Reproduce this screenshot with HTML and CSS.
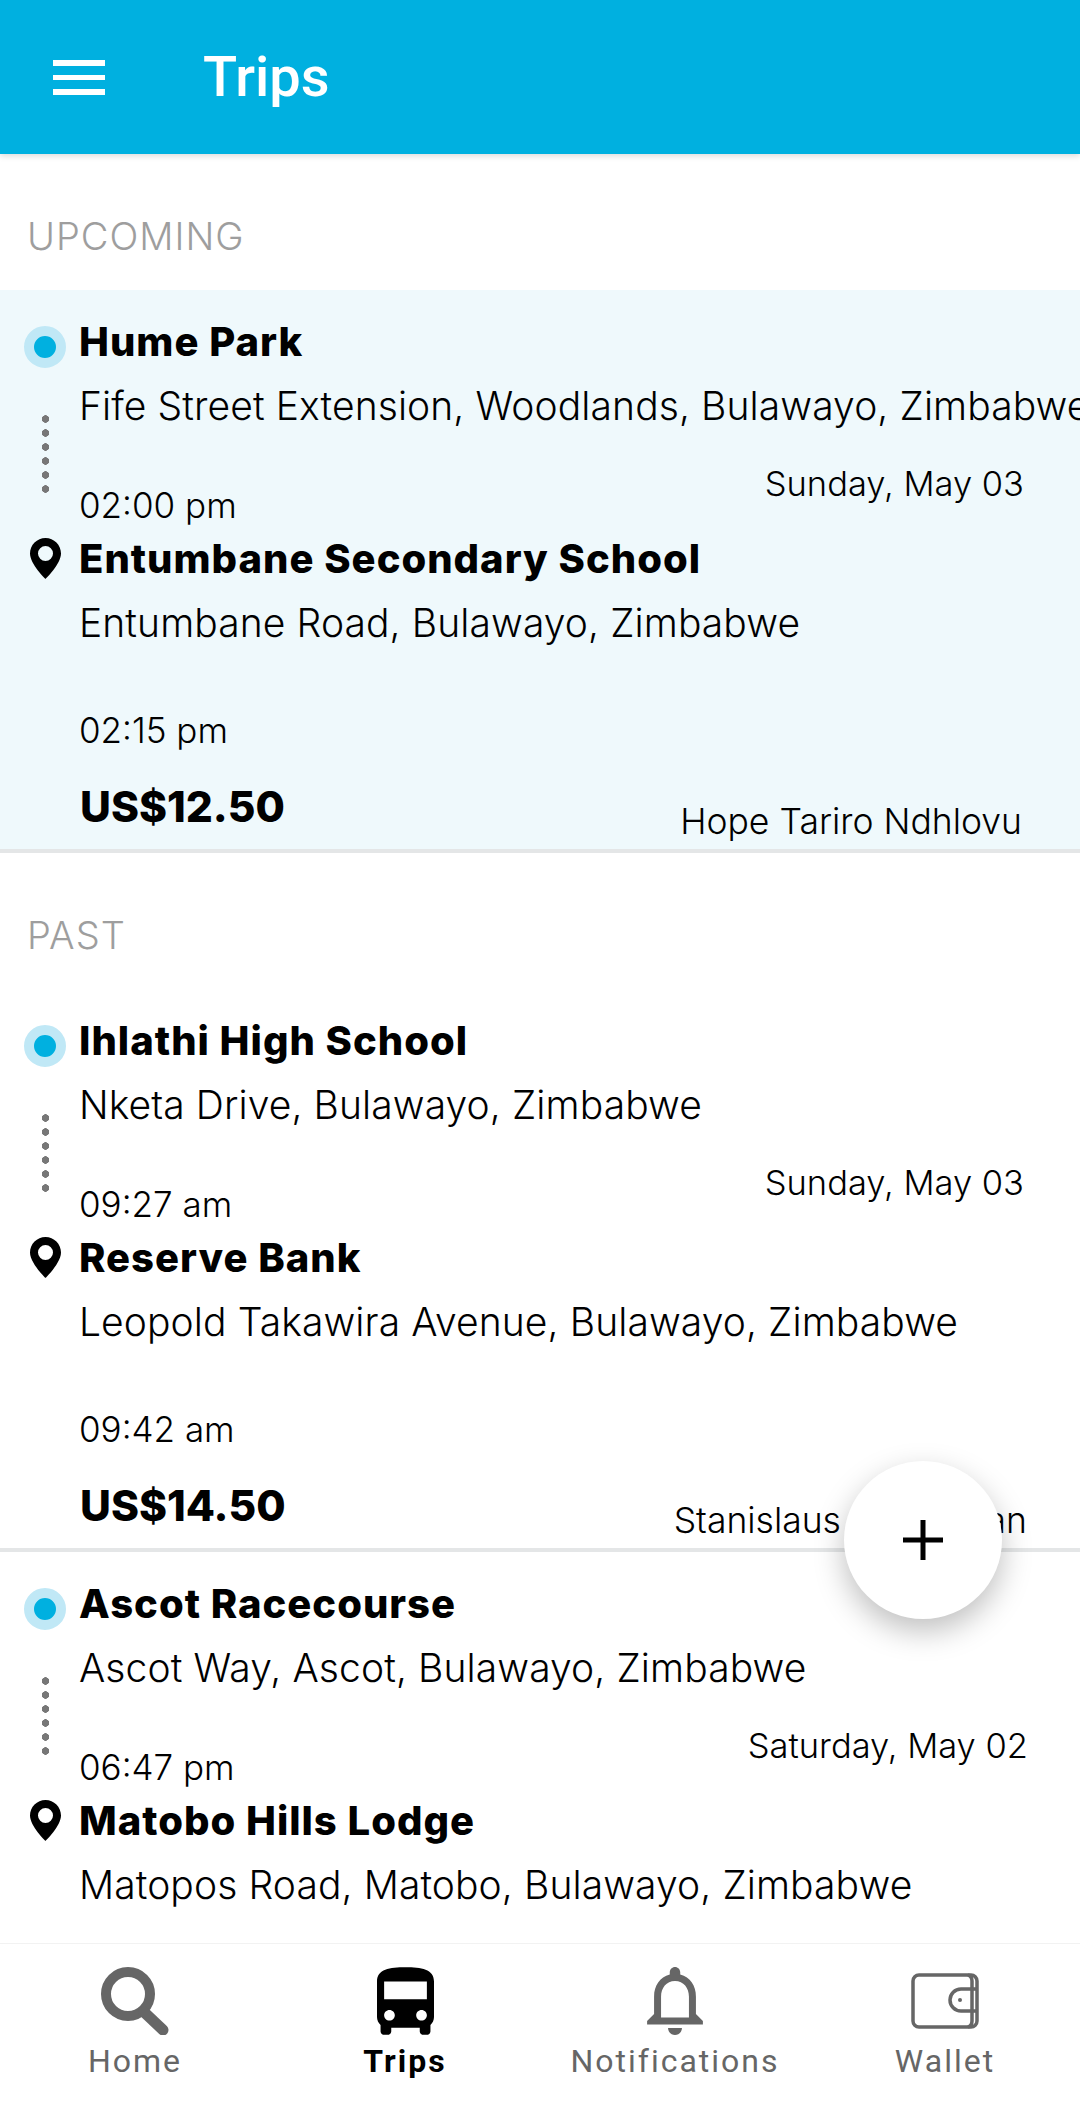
FILE: index.html
```html
<!DOCTYPE html>
<html lang="en">
<head>
<meta charset="UTF-8" />
<meta name="viewport" content="width=device-width, initial-scale=1.0"/>
<title>Trips</title>
<link rel="stylesheet" href="styles.css">
</head>
<body>
<div class="app">
  <header class="topbar">
    <svg class="menu-icon" width="52" height="35" viewBox="0 0 52 35"><path d="M0 0h52v6H0zM0 15h52v5H0zM0 29h52v6H0z" fill="#fff"/></svg>
    <h1>Trips</h1>
  </header>

  <main class="trips">
    <!-- Upcoming -->
    <h2 class="section-label">UPCOMING</h2>
    <article class="trip trip-active">
      <div class="stop">
        <div class="marker">
          <span class="dot"></span>
          <span class="trail"></span>
        </div>
        <div class="stop-text">
          <h3>Hume Park</h3>
          <p class="address">Fife Street Extension, Woodlands, Bulawayo, Zimbabwe</p>
          <div class="time-row">
            <span class="time">02:00 pm</span>
            <span class="date">Sunday, May 03</span>
          </div>
        </div>
      </div>
      <div class="stop stop-end">
        <div class="marker">
          <svg class="pin" width="31" height="41" viewBox="0 0 31 41"><path fill-rule="evenodd" d="M15.5 0C7 0 0 7 0 15.5 0 26 15.5 41 15.5 41S31 26 31 15.5C31 7 24 0 15.5 0zm0 8a7.5 7.5 0 1 1 0 15 7.5 7.5 0 1 1 0-15z"/></svg>
        </div>
        <div class="stop-text">
          <h3>Entumbane Secondary School</h3>
          <p class="address">Entumbane Road, Bulawayo, Zimbabwe</p>
          <div class="time-row"><span class="time">02:15 pm</span></div>
        </div>
      </div>
      <div class="trip-foot">
        <span class="price">US$12.50</span>
        <span class="driver">Hope Tariro Ndhlovu</span>
      </div>
    </article>

    <!-- Past -->
    <h2 class="section-label">PAST</h2>
    <article class="trip">
      <div class="stop">
        <div class="marker">
          <span class="dot"></span>
          <span class="trail"></span>
        </div>
        <div class="stop-text">
          <h3>Ihlathi High School</h3>
          <p class="address">Nketa Drive, Bulawayo, Zimbabwe</p>
          <div class="time-row">
            <span class="time">09:27 am</span>
            <span class="date">Sunday, May 03</span>
          </div>
        </div>
      </div>
      <div class="stop stop-end">
        <div class="marker">
          <svg class="pin" width="31" height="41" viewBox="0 0 31 41"><path fill-rule="evenodd" d="M15.5 0C7 0 0 7 0 15.5 0 26 15.5 41 15.5 41S31 26 31 15.5C31 7 24 0 15.5 0zm0 8a7.5 7.5 0 1 1 0 15 7.5 7.5 0 1 1 0-15z"/></svg>
        </div>
        <div class="stop-text">
          <h3>Reserve Bank</h3>
          <p class="address">Leopold Takawira Avenue, Bulawayo, Zimbabwe</p>
          <div class="time-row"><span class="time">09:42 am</span></div>
        </div>
      </div>
      <div class="trip-foot">
        <span class="price">US$14.50</span>
        <span class="driver driver-long">Stanislaus Monaghan</span>
      </div>
    </article>

    <article class="trip">
      <div class="stop">
        <div class="marker">
          <span class="dot"></span>
          <span class="trail"></span>
        </div>
        <div class="stop-text">
          <h3>Ascot Racecourse</h3>
          <p class="address">Ascot Way, Ascot, Bulawayo, Zimbabwe</p>
          <div class="time-row">
            <span class="time">06:47 pm</span>
            <span class="date date-long">Saturday, May 02</span>
          </div>
        </div>
      </div>
      <div class="stop stop-end">
        <div class="marker">
          <svg class="pin" width="31" height="41" viewBox="0 0 31 41"><path fill-rule="evenodd" d="M15.5 0C7 0 0 7 0 15.5 0 26 15.5 41 15.5 41S31 26 31 15.5C31 7 24 0 15.5 0zm0 8a7.5 7.5 0 1 1 0 15 7.5 7.5 0 1 1 0-15z"/></svg>
        </div>
        <div class="stop-text">
          <h3>Matobo Hills Lodge</h3>
          <p class="address">Matopos Road, Matobo, Bulawayo, Zimbabwe</p>
        </div>
      </div>
    </article>
  </main>

  <button class="fab" type="button" aria-label="Add trip">
    <svg width="40" height="40" viewBox="0 0 40 40"><path d="M17.5 0h5v17.500h17.500v5H22.500v17.500h-5V22.500H0v-5h17.500z"/></svg>
  </button>

  <!-- Bottom navigation -->
  <nav class="tabs">
    <a class="tab">
      <svg width="68" height="68" viewBox="0 0 68 68"><circle cx="27" cy="27" r="22" fill="none" stroke="#666" stroke-width="10"/><path d="M43 45l19 18" stroke="#666" stroke-width="11" stroke-linecap="round"/></svg>
      <span>Home</span>
    </a>
    <a class="tab tab-active">
      <svg width="57" height="68" viewBox="4 2 16 19"><path d="M4 16c0 .88.39 1.67 1 2.22V20c0 .55.45 1 1 1h1c.55 0 1-.45 1-1v-1h8v1c0 .55.45 1 1 1h1c.55 0 1-.45 1-1v-1.78c.61-.55 1-1.34 1-2.220V6c0-3.500-3.580-4-8-4s-8 .5-8 4v10zm3.500 1c-.83 0-1.500-.67-1.500-1.500S6.670 14 7.500 14s1.500.67 1.500 1.500S8.330 17 7.500 17zm9 0c-.83 0-1.500-.67-1.500-1.500s.67-1.500 1.500-1.500 1.500.67 1.500 1.500-.67 1.500-1.500 1.500zm1.500-6H6V6h12v5z"/></svg>
      <span>Trips</span>
    </a>
    <a class="tab">
      <svg width="58" height="68" viewBox="4 2.500 16 19.500"><path fill="#666" d="M12 22c1.100 0 2-.9 2-2h-4c0 1.100.9 2 2 2zm6-6v-5c0-3.070-1.630-5.640-4.500-6.320V4c0-.83-.67-1.500-1.500-1.500s-1.500.67-1.500 1.500v.68C7.640 5.360 6 7.920 6 11v5l-2 2v1h16v-1l-2-2zm-2 1H8v-6c0-2.480 1.510-4.500 4-4.500s4 2.020 4 4.500v6z"/></svg>
      <span>Notifications</span>
    </a>
    <a class="tab">
      <svg class="wallet" width="68" height="56" viewBox="0 0 68 56" fill="none" stroke="#666" stroke-width="3.500"><rect x="2" y="2" width="64" height="52" rx="6"/><path d="M57 2c3 1 4 3 4 6v40c0 3-1 5-4 6"/><path d="M66 16H50a11 11 0 0 0 0 22h16"/><circle cx="49" cy="27" r="2" fill="#666" stroke="none"/></svg>
      <span>Wallet</span>
    </a>
  </nav>
</div>
</body>
</html>
```
FILE: styles.css
```css
* {
  box-sizing: border-box;
}
body {
  margin: 0;
  font-family: Inter, Lato, sans-serif;
  background: #fff;
  color: #000;
}
.app {
  position: relative;
  display: flex;
  flex-direction: column;
  height: 2110px;
  overflow: hidden;
}

/* Top bar */
.topbar {
  position: relative;
  z-index: 2;
  flex: none;
  display: flex;
  align-items: center;
  gap: 98px;
  height: 154px;
  padding-left: 53px;
  background: #00b0e0;
  box-shadow: 0 2px 6px rgba(0,0,0,0.15);
}
.topbar h1 {
  margin: 0;
  color: #fff;
  font-family: Roboto, sans-serif;
  font-size: 56px;
  font-weight: 500;
}

/* Trip list */
.trips {
  flex: 1;
  min-height: 0;
  overflow: hidden;
}
.section-label {
  display: flex;
  align-items: center;
  height: 136px;
  margin: 0;
  padding: 28px 0 0 27px;
  color: #9e9e9e;
  font-size: 38px;
  font-weight: 300;
  letter-spacing: 1px;
}
.trip {
  height: 563px;
  padding-top: 26px;
  overflow: hidden;
  border-bottom: 4px solid #e4e6e7;
}
.trip-active {
  background: #eff9fc;
}
.stop {
  display: flex;
  height: 217px;
}
.stop-end {
  height: 222px;
}
.marker {
  flex: none;
  display: flex;
  flex-direction: column;
  align-items: center;
  width: 42px;
  margin: 10px 13px 0 24px;
}
.stop-end .marker {
  margin-top: 5px;
}
.dot {
  width: 42px;
  height: 42px;
  border: 10px solid #c0e8f6;
  border-radius: 50%;
  background: #00b0e0;
}
.trail {
  width: 7px;
  height: 84px;
  margin-top: 44px;
  background: radial-gradient(circle, #777 3.5px, transparent 4px) 0 0 / 7px 14px repeat-y;
}
.stop-text {
  flex: 1;
  min-width: 0;
  padding-right: 56px;
}
.stop-text h3 {
  margin: 1px 0 0;
  font-size: 40px;
  font-weight: 800;
  letter-spacing: 1px;
  line-height: 50px;
  white-space: nowrap;
}
.address {
  margin: 14px 0 0;
  font-size: 39px;
  font-weight: 300;
  letter-spacing: 0.1px;
  line-height: 50px;
  white-space: nowrap;
}
.time-row {
  display: flex;
  justify-content: space-between;
  align-items: flex-start;
  margin-top: 49px;
}
.stop-end .time-row {
  margin-top: 57px;
}
.time {
  font-size: 35px;
  font-weight: 300;
  line-height: 50px;
}
.date {
  margin-top: -21px;
  font-size: 34.5px;
  font-weight: 300;
  line-height: 50px;
}
.date-long {
  margin-right: -4px;
}
.trip-foot {
  display: flex;
  justify-content: space-between;
  height: 92px;
  padding: 27px 58px 0 80px;
}
.price {
  font-size: 42.5px;
  font-weight: 800;
  line-height: 50px;
}
.driver {
  align-self: flex-end;
  font-size: 35.5px;
  font-weight: 300;
  line-height: 50px;
}
.driver-long {
  margin-right: -5px;
}

/* Add button, floats over the list */
.fab {
  position: absolute;
  right: 78px;
  bottom: 491px;
  z-index: 3;
  display: flex;
  align-items: center;
  justify-content: center;
  width: 158px;
  height: 158px;
  padding: 0;
  border: none;
  border-radius: 50%;
  background: #fff;
  box-shadow: 0 12px 30px rgba(0,0,0,0.25);
}

/* Bottom navigation */
.tabs {
  position: relative;
  z-index: 2;
  flex: none;
  display: grid;
  grid-template-columns: repeat(4, 1fr);
  height: 167px;
  padding-top: 23px;
  border-top: 1px solid #f2f2f2;
  background: #fff;
}
.tab {
  display: flex;
  flex-direction: column;
  align-items: center;
  color: #666;
  font-family: Roboto, sans-serif;
  font-size: 32px;
  letter-spacing: 2px;
}
.tab svg {
  height: 68px;
  flex: none;
}
.tab svg.wallet {
  height: 56px;
  margin: 6px 0;
}
.tab span {
  margin-top: 4px;
  line-height: 44px;
}
.tab-active {
  color: #000;
  font-weight: 700;
}
```
